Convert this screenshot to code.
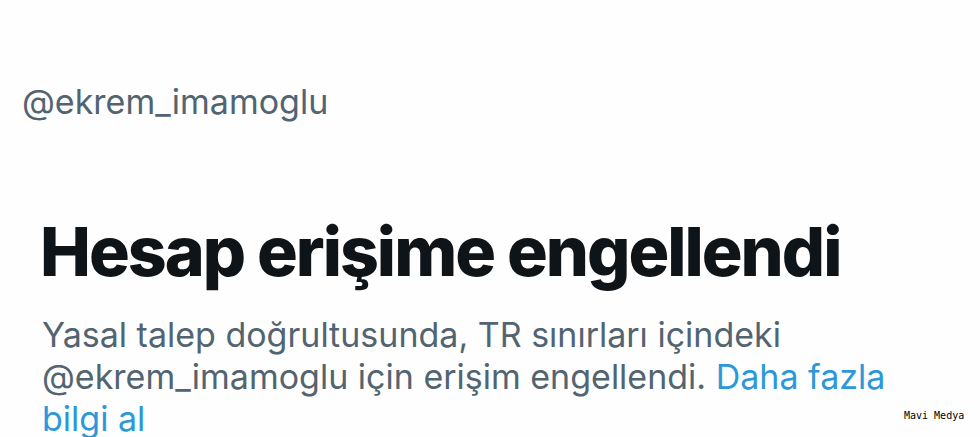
export default function App() {
  return (
    <div className="relative w-[980px] h-[437px] overflow-hidden bg-[#fefefe]" style={{ fontFamily: "Inter, 'Noto Sans', sans-serif" }}>
      <div className="pl-[22px] pt-[82px] text-[34px] leading-[40px] text-[#536471]">@ekrem_imamoglu</div>
      <div className="pl-[40px] pt-[93px] text-[68px] leading-[72px] font-extrabold text-[#0f1419] tracking-[-2px]">Hesap erişime engellendi</div>
      <div className="ml-[42px] pt-[27px] w-[850px] text-[34px] leading-[42px] text-[#536471]">
        Yasal talep doğrultusunda, TR sınırları içindeki<br />
        @ekrem_imamoglu için erişim engellendi. <span className="text-[#2c98d9]">Daha fazla bilgi al</span>
      </div>
      <div className="absolute left-[904px] top-[410px] whitespace-nowrap text-[10px] leading-[12px] text-black" style={{ fontFamily: "'DejaVu Sans Mono', monospace" }}>Mavi Medya</div>
    </div>
  );
}
